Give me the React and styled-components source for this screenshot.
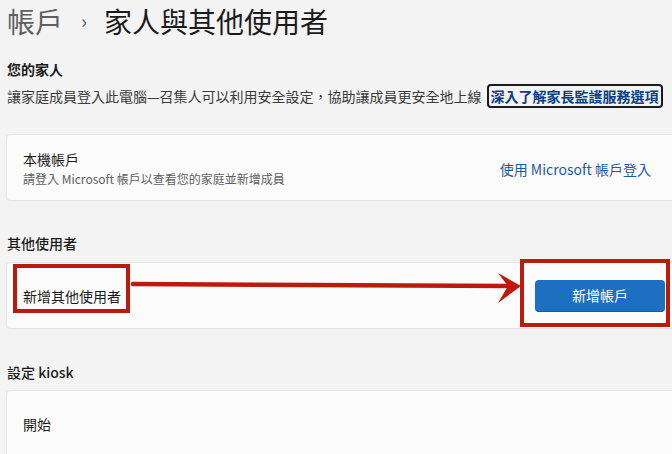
import React from "react";
import styled, { createGlobalStyle } from "styled-components";

const GlobalStyle = createGlobalStyle`
  body {
    margin: 0;
    background: #f3f3f3;
    overflow: hidden;
    font-family: "Noto Sans CJK TC", "Noto Sans", sans-serif;
    color: #1b1b1b;
  }
`;

const Page = styled.div`
  width: 684px;
  padding-left: 6px;
  height: 454px;
  overflow: hidden;
`;

const Title = styled.h1`
  margin: 0;
  height: 42px;
  line-height: 42px;
  font-size: 28px;
  font-weight: 400;
  display: flex;
  align-items: center;
  padding-left: 1px;
`;

const Crumb = styled.span`
  color: #5f5f5f;
`;

const Chevron = styled.span`
  color: #5f5f5f;
  font-size: 20px;
  margin: 0 17px 0 18px;
`;

const SectionHeading = styled.h2`
  margin: ${(p) => p.$top}px 0 ${(p) => p.$bottom}px 1px;
  font-size: 14px;
  line-height: 20px;
  font-weight: ${(p) => (p.$bold ? 700 : 500)};
  color: #1b1b1b;
`;

const DescRow = styled.div`
  display: flex;
  align-items: center;
  height: 24px;
  margin: 5px 0 26px 1px;
  font-size: 14px;
  color: #3a3a3a;
  white-space: nowrap;
`;

const LearnLink = styled.a`
  margin-left: 5px;
  border: 2px solid #1b1b1b;
  border-radius: 4px;
  padding: 0 2px;
  line-height: 20px;
  font-weight: 700;
  color: #0b3d86;
  text-decoration: none;
`;

const Card = styled.div`
  position: relative;
  display: flex;
  align-items: center;
  justify-content: space-between;
  height: ${(p) => p.$height}px;
  box-sizing: border-box;
  background: #fbfbfb;
  border: 1px solid #e5e5e5;
  border-radius: 4px;
  padding: 0 24px 0 16px;
`;

const CardText = styled.div`
  display: flex;
  flex-direction: column;
  margin-top: ${(p) => p.$shift || 0}px;
`;

const CardTitle = styled.span`
  font-size: 14px;
  line-height: 20px;
  color: #1b1b1b;
`;

const CardSub = styled.span`
  font-size: 12px;
  line-height: 20px;
  color: #606060;
`;

const TextLink = styled.a`
  font-size: 14px;
  line-height: 20px;
  color: #1f5a9e;
  margin: 2px 14px 0 0;
  text-decoration: none;
`;

const Marked = styled.span`
  position: relative;
  display: inline-block;
  &::before {
    content: "";
    position: absolute;
    top: ${(p) => p.$t}px;
    right: ${(p) => p.$r}px;
    bottom: ${(p) => p.$b}px;
    left: ${(p) => p.$l}px;
    border: 4px solid #bb1a0e;
    pointer-events: none;
  }
`;

const PrimaryButton = styled.button`
  width: 130px;
  height: 32px;
  border: none;
  border-bottom: 1px solid #15599e;
  border-radius: 4px;
  background: #1d6fc2;
  color: #ffffff;
  font-family: inherit;
  font-size: 14px;
`;

const ArrowLayer = styled.svg`
  position: absolute;
  left: 0;
  top: 0;
  width: 100%;
  height: 100%;
  overflow: visible;
  pointer-events: none;
`;

export default function App() {
  return (
    <>
      <GlobalStyle />
      <Page>
        <Title>
          <Crumb>帳戶</Crumb>
          <Chevron>›</Chevron>
          <span>家人與其他使用者</span>
        </Title>

        <SectionHeading $top={17} $bottom={0} $bold>您的家人</SectionHeading>
        <DescRow>
          讓家庭成員登入此電腦—召集人可以利用安全設定，協助讓成員更安全地上線
          <LearnLink href="#">深入了解家長監護服務選項</LearnLink>
        </DescRow>

        <Card $height={67}>
          <CardText $shift={2}>
            <CardTitle>本機帳戶</CardTitle>
            <CardSub>請登入 Microsoft 帳戶以查看您的家庭並新增成員</CardSub>
          </CardText>
          <TextLink href="#">使用 Microsoft 帳戶登入</TextLink>
        </Card>

        <SectionHeading $top={32} $bottom={9}>其他使用者</SectionHeading>
        <Card $height={67}>
          <CardTitle>
            <Marked $t={-22} $r={-9} $b={-7} $l={-10}>新增其他使用者</Marked>
          </CardTitle>
          <Marked $t={-21} $r={-5} $b={-15} $l={-15}>
            <PrimaryButton>新增帳戶</PrimaryButton>
          </Marked>
          <ArrowLayer>
            <line x1="126" y1="21" x2="503" y2="23" stroke="#bb1a0e" strokeWidth="4.5" strokeLinecap="round" />
            <polygon points="491,10 514,23 491,40 501,23" fill="#bb1a0e" />
          </ArrowLayer>
        </Card>

        <SectionHeading $top={33} $bottom={8}>設定 kiosk</SectionHeading>
        <Card $height={80}>
          <CardText $shift={-12}>
            <CardTitle>開始</CardTitle>
          </CardText>
        </Card>
      </Page>
    </>
  );
}
